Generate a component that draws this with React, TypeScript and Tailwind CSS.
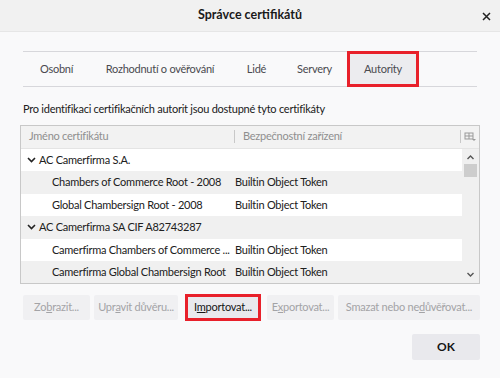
const tabs = [
  { label: "Osobní", w: "w-[65px]" },
  { label: "Rozhodnutí o ověřování", w: "w-[142px]" },
  { label: "Lidé", w: "w-[51px]" },
  { label: "Servery", w: "w-[65px]" },
];

const rows = [
  { name: "AC Camerfirma S.A.", token: "", group: true },
  { name: "Chambers of Commerce Root - 2008", token: "Builtin Object Token", group: false },
  { name: "Global Chambersign Root - 2008", token: "Builtin Object Token", group: false },
  { name: "AC Camerfirma SA CIF A82743287", token: "", group: true },
  { name: "Camerfirma Chambers of Commerce ...", token: "Builtin Object Token", group: false },
  { name: "Camerfirma Global Chambersign Root", token: "Builtin Object Token", group: false },
];

function Chevron() {
  return (
    <svg width="9" height="6" viewBox="0 0 9 6" className="mr-[3px] shrink-0">
      <path d="M1 1 L4.5 4.5 L8 1" fill="none" stroke="#222" strokeWidth="1.6" />
    </svg>
  );
}

export default function App() {
  return (
    <div
      className="flex h-[378px] w-[500px] flex-col bg-[#f9f9fa] text-[11px] tracking-[-0.25px] text-[#202020]"
      style={{ fontFamily: 'Lato, "Open Sans", sans-serif' }}
    >
      {/* title bar */}
      <div className="relative flex h-[32px] items-center justify-center border-b border-[#e6e6e6] bg-[#f1f1f1]">
        <span className="text-[12.5px] font-bold tracking-normal text-[#1a1a1a]">Správce certifikátů</span>
        <svg className="absolute right-[9px] top-[12px]" width="9" height="9" viewBox="0 0 9 9">
          <path d="M1 1 L8 8 M8 1 L1 8" stroke="#222" strokeWidth="1.5" />
        </svg>
      </div>

      <div className="flex flex-1 flex-col px-[20px]">
        {/* tabs */}
        <div className="mx-[3px] mt-[19px] flex h-[36px] items-stretch border-y border-[#d7d7db] pl-px">
          {tabs.map((t) => (
            <div key={t.label} className={`flex items-center justify-center text-[#4a4a4f] ${t.w}`}>
              {t.label}
            </div>
          ))}
          <div className="-my-px flex w-[72px] items-center justify-center border-[3px] border-[#e8202a] bg-[#ececef] text-[#4a4a4f]">
            Autority
          </div>
        </div>

        <div className="mt-[14px] pl-[3px] text-[#202020]">
          Pro identifikaci certifikačních autorit jsou dostupné tyto certifikáty
        </div>

        {/* tree */}
        <div className="mt-[7px] flex h-[159px] flex-col border border-[#c8c8c8] bg-white">
          <div className="flex h-[23px] items-center border-b border-[#e4e4e4] bg-[#f2f2f2] text-[#8f8f8f]">
            <div className="w-[213px] pl-[8px]">Jméno certifikátu</div>
            <div className="h-[13px] w-px bg-[#c8c8c8]" />
            <div className="flex-1 pl-[8px]">Bezpečnostní zařízení</div>
            <div className="h-[13px] w-px bg-[#c8c8c8]" />
            <svg width="17" height="12" viewBox="0 0 17 12" className="mr-px">
              <rect x="4" y="2" width="8" height="6" fill="none" stroke="#999" />
              <path d="M4 5 H12 M8 2 V8" stroke="#999" />
              <path d="M11 8 L13 10 L15 8" fill="#999" />
            </svg>
          </div>
          <div className="flex flex-1 overflow-hidden">
            <div className="flex flex-1 flex-col">
              {rows.map((r, i) => (
                <div
                  key={i}
                  className={`flex h-[22.5px] shrink-0 items-center ${i % 2 === 1 ? "bg-[#f0f0f0]" : "bg-white"}`}
                >
                  <div
                    className={`flex w-[214px] shrink-0 items-center overflow-hidden whitespace-nowrap ${r.group ? "pl-[6px]" : "pl-[31px]"}`}
                  >
                    {r.group && <Chevron />}
                    {r.name}
                  </div>
                  <div className="whitespace-nowrap">{r.token}</div>
                </div>
              ))}
            </div>
            <div className="flex w-[17px] flex-col items-center bg-[#f0f0f0]">
              <svg width="9" height="11" viewBox="0 0 9 11" className="mt-[3px]">
                <path d="M1.5 7 L4.5 4 L7.5 7" fill="none" stroke="#555" strokeWidth="1.4" />
              </svg>
              <div className="mt-[1px] h-[13px] w-[13px] bg-[#cdcdcd]" />
              <div className="flex-1" />
              <svg width="9" height="11" viewBox="0 0 9 11" className="mb-[3px]">
                <path d="M1.5 4 L4.5 7 L7.5 4" fill="none" stroke="#555" strokeWidth="1.4" />
              </svg>
            </div>
          </div>
        </div>

        {/* buttons */}
        <div className="mt-[10px] flex items-center whitespace-nowrap pl-[3px]">
          <button className="h-[25px] w-[67px] rounded-[2px] bg-[#f0f0f2] text-[#a3a3a6]">
            Zo<u>b</u>razit...
          </button>
          <button className="ml-[4px] h-[25px] w-[84px] rounded-[2px] bg-[#f0f0f2] text-[#a3a3a6]">
            Upr<u>a</u>vit důvěru...
          </button>
          <button className="ml-[7px] h-[27px] w-[76px] border-[3px] border-[#e8202a] bg-[#e9e9ed] text-[#151515]">
            I<u>m</u>portovat...
          </button>
          <button className="ml-[6px] h-[25px] w-[67px] rounded-[2px] bg-[#f0f0f2] text-[#a3a3a6]">
            E<u>x</u>portovat...
          </button>
          <button className="ml-[4px] h-[25px] flex-1 rounded-[2px] bg-[#f0f0f2] text-[#a3a3a6]">
            Smazat nebo ne<u>d</u>ůvěřovat...
          </button>
        </div>

        <div className="mt-[13px] flex justify-end">
          <button className="h-[26px] w-[68px] rounded-[2px] bg-[#e9e9ed] text-[12px] font-bold tracking-normal text-[#151515]">
            OK
          </button>
        </div>
      </div>
    </div>
  );
}
